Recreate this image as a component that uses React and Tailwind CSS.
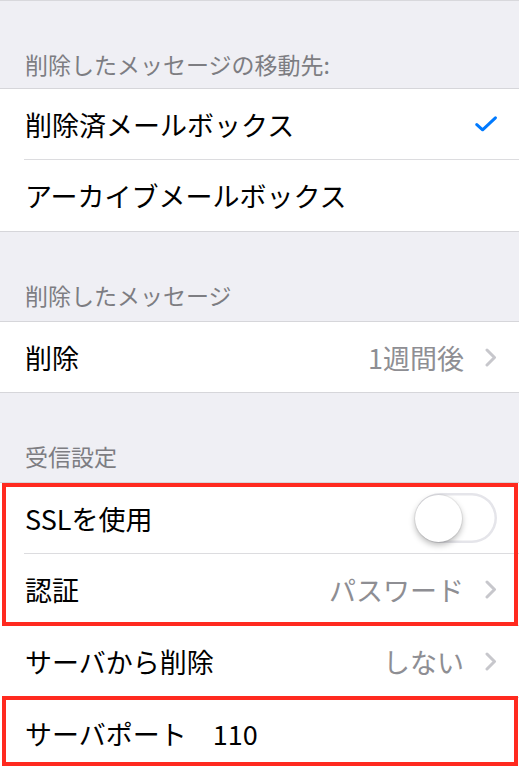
import React from "react";

const font = { fontFamily: '"Noto Sans CJK JP", "Noto Sans", sans-serif' };

const Chevron = () => (
  <svg width="12" height="19" viewBox="0 0 12 19" fill="none">
    <path d="M2 2 L9.5 9.5 L2 17" stroke="#c7c7cc" strokeWidth="3" strokeLinecap="round" strokeLinejoin="round" />
  </svg>
);

const Check = () => (
  <svg width="22" height="16" viewBox="0 0 22 16" fill="none">
    <path d="M1.8 8.6 L7.6 13.8 L20.4 1.8" stroke="#007aff" strokeWidth="3" strokeLinecap="round" strokeLinejoin="round" />
  </svg>
);

const Toggle = () => (
  <div className="relative w-[82px] h-[50px] rounded-full bg-white shadow-[inset_0_0_0_2.5px_#e5e5ea]">
    <div className="absolute left-0 top-[1.5px] w-[47px] h-[47px] rounded-full bg-white shadow-[0_3px_6px_rgba(0,0,0,0.28),0_0_0_1px_rgba(0,0,0,0.06)]" />
  </div>
);

const Header = ({ children, h = "h-[89px]", pb = "pb-[14px]" }) => (
  <div className={`flex items-end pl-[25px] ${h} ${pb}`}>
    <span className="text-[23px] leading-[23px] text-[#7d7d82]">{children}</span>
  </div>
);

const Row = ({ label, value, right, h = "h-[71px]" }) => (
  <div className={`flex items-center justify-between pl-[25px] pr-[22px] bg-white ${h}`}>
    <span className="text-[27px] leading-none text-black">{label}</span>
    <div className="flex items-center gap-[21px]">
      {value && <span className="text-[27px] leading-none text-[#8e8e93]">{value}</span>}
      {right}
    </div>
  </div>
);

const Sep = () => (
  <div className="bg-white">
    <div className="ml-[24px] h-px bg-[#dcdcdf]" />
  </div>
);

const RedBox = ({ className }) => (
  <div className={`absolute left-[2px] right-px border-4 border-[#ff2a1f] pointer-events-none ${className}`} />
);

export default function App() {
  return (
    <div style={font} className="w-[519px] h-[768px] overflow-hidden bg-[#efeff4]">
      <div className="h-px bg-[#d8d8dc]" />
      <Header h="h-[87px]" pb="pb-[12px]">削除したメッセージの移動先:</Header>

      <div className="border-y border-[#d6d6da]">
        <Row label="削除済メールボックス" h="h-[70px]" right={<Check />} />
        <Sep />
        <Row label="アーカイブメールボックス" />
      </div>

      <Header>削除したメッセージ</Header>

      <div className="border-y border-[#d6d6da]">
        <Row label="削除" value="1週間後" h="h-[70px]" right={<Chevron />} />
      </div>

      <Header>受信設定</Header>

      <div className="border-t border-[#d6d6da]">
        <div className="relative">
          <Row label="SSLを使用" h="h-[70px]" right={<Toggle />} />
          <Sep />
          <Row label="認証" value="パスワード" right={<Chevron />} />
          <RedBox className="top-0 bottom-[-1px]" />
        </div>
        <Sep />
        <Row label="サーバから削除" value="しない" right={<Chevron />} />
        <Sep />
        <div className="relative">
          <div className="flex items-center pl-[25px] h-[70px] bg-white">
            <span className="text-[27px] leading-none text-black">サーバポート</span>
            <span className="ml-[26px] text-[27px] leading-none text-black">110</span>
          </div>
          <RedBox className="top-[-2px] bottom-[2px]" />
        </div>
      </div>
    </div>
  );
}
